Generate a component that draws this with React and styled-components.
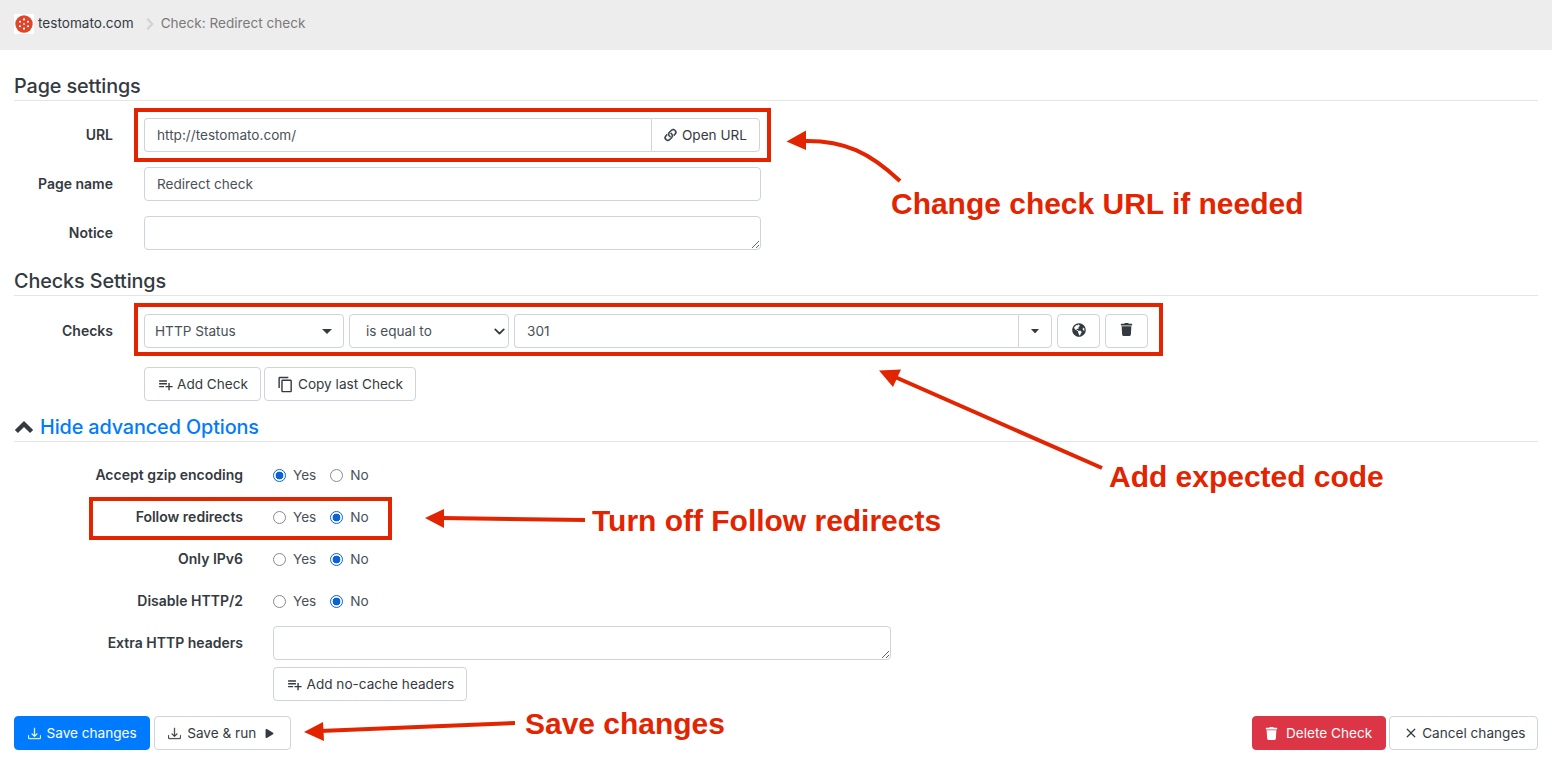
import React from "react";
import styled, { createGlobalStyle } from "styled-components";
import { BsLink45Deg, BsDownload, BsX } from "react-icons/bs";
import { MdPlaylistAdd, MdContentCopy } from "react-icons/md";
import { FaGlobeAmericas, FaTrash, FaPlay } from "react-icons/fa";
import { LuChevronDown } from "react-icons/lu";

const Global = createGlobalStyle`
  html, body { margin: 0; padding: 0; background: #fff; }
  body { font-family: Inter, "Noto Sans", sans-serif; font-size: 13.6px; color: #343a40; }
  * { box-sizing: border-box; }
`;

const Page = styled.div`
  position: relative;
  width: 1552px;
  height: 763px;
  overflow: hidden;
`;

const TopBar = styled.header`
  height: 50px;
  background: #ededed;
  display: flex;
  align-items: center;
  padding: 0 14px 4px;
  font-size: 13.6px;
`;

const LogoTile = styled.span`
  width: 20px;
  height: 20px;
  background: #fff;
  display: inline-flex;
  align-items: center;
  justify-content: center;
  margin: 2px 4px 0 0;
`;

const SiteName = styled.span`
  color: #343a40;
`;

const CrumbSep = styled.svg`
  margin: 2px 7px 0 12px;
`;

const Crumb = styled.span`
  color: #7a7a7a;
`;

const Main = styled.main`
  padding: 22px 14px 0;
`;

const Heading = styled.h2`
  margin: ${(p) => p.$top || 0}px 0 ${(p) => p.$bottom || 18}px;
  height: 29px;
  line-height: 28px;
  font-size: 19.8px;
  font-weight: 500;
  letter-spacing: -0.1px;
  color: #343a40;
  border-bottom: 1px solid #e3e5e7;
  display: flex;
  align-items: center;
`;

const ToggleLink = styled.a`
  color: #007bff;
  margin-left: 6px;
`;

const Row = styled.div`
  display: grid;
  grid-template-columns: ${(p) => p.$label || 99}px auto;
  column-gap: ${(p) => p.$gap || 31}px;
  align-items: center;
  justify-content: start;
  min-height: 34px;
  margin-bottom: ${(p) => p.$bottom ?? 15}px;
`;

const Label = styled.label`
  text-align: right;
  font-weight: 600;
  font-size: 14px;
  color: #343a40;
  padding-bottom: 1px;
`;

const Field = styled.input`
  width: ${(p) => p.$w || 617}px;
  height: 34px;
  padding: 0 12px;
  border: 1px solid #ced4da;
  border-radius: 4px;
  font: inherit;
  color: #495057;
  background: #fff;
  outline: none;
`;

const InputGroup = styled.div`
  display: flex;
  width: ${(p) => p.$w}px;
`;

const GroupField = styled(Field)`
  flex: 1;
  width: auto;
  min-width: 0;
  border-radius: 4px 0 0 4px;
  border-right: none;
`;

const Area = styled.textarea`
  display: block;
  width: ${(p) => p.$w || 617}px;
  height: 34px;
  padding: 6px 12px;
  border: 1px solid #ced4da;
  border-radius: 4px;
  font: inherit;
  outline: none;
`;

const Button = styled.button`
  display: inline-flex;
  align-items: center;
  justify-content: center;
  gap: ${(p) => p.$gap ?? 5}px;
  height: 34px;
  padding: 0 ${(p) => p.$pad ?? 12}px;
  font: inherit;
  border: 1px solid ${(p) => (p.$variant === "primary" ? "#007bff" : p.$variant === "danger" ? "#dc3545" : "#ced4da")};
  background: ${(p) => (p.$variant === "primary" ? "#007bff" : p.$variant === "danger" ? "#dc3545" : "#fff")};
  color: ${(p) => (p.$variant ? "#fff" : "#343a40")};
  border-radius: ${(p) => p.$radius || "4px"};
  white-space: nowrap;
`;

const CheckLine = styled.div`
  display: flex;
  align-items: center;
`;

const SelectWrap = styled.div`
  position: relative;
  width: ${(p) => p.$w}px;
  margin-right: 5px;
  height: 34px;
`;

const Select = styled.select`
  appearance: none;
  width: 100%;
  height: 34px;
  padding: 0 0 0 ${(p) => p.$pad}px;
  border: 1px solid #ced4da;
  border-radius: 4px;
  background: #fff;
  font: inherit;
  color: #495057;
  outline: none;
`;

const SelectIcon = styled.span`
  position: absolute;
  right: ${(p) => p.$right}px;
  top: 0;
  height: 34px;
  display: flex;
  align-items: center;
  pointer-events: none;
  color: #343a40;
`;

const IconBtn = styled(Button)`
  width: ${(p) => p.$w || 43}px;
  padding: 0 0 ${(p) => p.$lift ?? 3}px;
  margin-left: ${(p) => p.$ml ?? 5}px;
  color: #343a40;
`;

const Actions = styled.div`
  display: flex;
  gap: ${(p) => p.$gap ?? 3}px;
`;

const RadioRow = styled(Row)`
  margin-bottom: 8px;
`;

const RadioGroup = styled.div`
  display: flex;
  align-items: center;
  gap: 14px;
`;

const RadioLabel = styled.label`
  display: inline-flex;
  align-items: center;
  gap: 7px;
  color: #495057;
`;

const Radio = styled.input.attrs({ type: "radio" })`
  appearance: none;
  width: 13px;
  height: 13px;
  margin: 0;
  border-radius: 50%;
  border: 1px solid #8a8a8a;
  background: #fff;
  &:checked {
    border: 1px solid #0a63d8;
    background: radial-gradient(circle, #0a63d8 0 3.6px, #fff 4.2px);
  }
`;

const Footer = styled.div`
  display: flex;
  justify-content: space-between;
  margin-top: 15px;
`;

const BoldDownload = styled(BsDownload)`
  stroke: currentColor;
  stroke-width: 0.4;
`;

const BoldLink = styled(BsLink45Deg)`
  stroke: currentColor;
  stroke-width: 0.5;
  margin-left: -2px;
`;

const PlayIcon = styled(FaPlay)`
  margin: 0 3px;
`;

const Overlay = styled.svg`
  position: absolute;
  inset: 0;
  pointer-events: none;
`;

const Note = styled.div`
  position: absolute;
  left: ${(p) => p.$x}px;
  top: ${(p) => p.$y}px;
  font-family: "Liberation Sans", Arial, sans-serif;
  font-weight: 700;
  font-size: 29.98px;
  line-height: 34px;
  color: #e32400;
  white-space: nowrap;
`;

const Frame = styled.div`
  position: absolute;
  left: ${(p) => p.$x}px;
  top: ${(p) => p.$y}px;
  width: ${(p) => p.$w}px;
  height: ${(p) => p.$h}px;
  border: 4px solid #e32400;
  pointer-events: none;
`;

const Logo = () => (
  <svg width="18" height="18" viewBox="0 0 18 18">
    <circle cx="9" cy="9" r="8.7" fill="#e0452a" />
    {[0, 60, 120, 180, 240, 300].map((a) => (
      <circle
        key={a}
        cx={9 + 4.6 * Math.cos(((a + 30) * Math.PI) / 180)}
        cy={9 + 4.6 * Math.sin(((a + 30) * Math.PI) / 180)}
        r="1.05"
        fill="#fff"
      />
    ))}
    <circle cx="9" cy="9" r="0.9" fill="#fff" />
  </svg>
);

const Caret = ({ w = 10, h = 5 }) => (
  <svg width={w} height={h} viewBox="0 0 10 5" preserveAspectRatio="none">
    <path d="M0 0 H10 L5 5 Z" fill="currentColor" />
  </svg>
);

const ChevronUp = () => (
  <svg width="20" height="14" viewBox="0 0 20 14">
    <path d="M2.4 11.5 L10 4 L17.6 11.5" fill="none" stroke="currentColor" strokeWidth="4.4" />
  </svg>
);

const RadioPair = ({ name, yes }) => (
  <RadioGroup>
    <RadioLabel>
      <Radio name={name} defaultChecked={yes} />
      Yes
    </RadioLabel>
    <RadioLabel>
      <Radio name={name} defaultChecked={!yes} />
      No
    </RadioLabel>
  </RadioGroup>
);

export default function App() {
  return (
    <Page>
      <Global />
      <TopBar>
        <LogoTile>
          <Logo />
        </LogoTile>
        <SiteName>testomato.com</SiteName>
        <CrumbSep width="8" height="12" viewBox="0 0 8 12">
          <path d="M1.2 0.8 L6.2 6 L1.2 11.2" fill="none" stroke="#d2d2d2" strokeWidth="2.2" />
        </CrumbSep>
        <Crumb>Check: Redirect check</Crumb>
      </TopBar>
      <Main>
        <Heading $bottom={17}>Page settings</Heading>
        <Row>
          <Label>URL</Label>
          <InputGroup $w={616}>
            <GroupField defaultValue="http://testomato.com/" />
            <Button $radius="0 4px 4px 0" $gap={3} $pad={12}>
              <BoldLink size={17} />
              Open URL
            </Button>
          </InputGroup>
        </Row>
        <Row>
          <Label>Page name</Label>
          <Field defaultValue="Redirect check" />
        </Row>
        <Row $bottom={0}>
          <Label>Notice</Label>
          <Area />
        </Row>

        <Heading $top={17}>Checks Settings</Heading>
        <Row $bottom={19}>
          <Label>Checks</Label>
          <CheckLine>
            <SelectWrap $w={200}>
              <Select $pad={10} defaultValue="HTTP Status">
                <option>HTTP Status</option>
              </Select>
              <SelectIcon $right={12}>
                <Caret />
              </SelectIcon>
            </SelectWrap>
            <SelectWrap $w={160}>
              <Select $pad={16} defaultValue="is equal to">
                <option>is equal to</option>
              </Select>
              <SelectIcon $right={1}>
                <LuChevronDown size={17} strokeWidth={2.6} />
              </SelectIcon>
            </SelectWrap>
            <InputGroup $w={538}>
              <GroupField defaultValue="301" />
              <IconBtn $w={34} $ml={0} $lift={0} $radius="0 4px 4px 0">
                <Caret w={8} h={4.5} />
              </IconBtn>
            </InputGroup>
            <IconBtn>
              <FaGlobeAmericas size={14} />
            </IconBtn>
            <IconBtn>
              <FaTrash size={13} />
            </IconBtn>
          </CheckLine>
        </Row>
        <Row $bottom={0}>
          <span />
          <Actions>
            <Button $gap={3}>
              <MdPlaylistAdd size={17} />
              Add Check
            </Button>
            <Button $gap={4}>
              <MdContentCopy size={17} />
              Copy last Check
            </Button>
          </Actions>
        </Row>

        <Heading $top={12} $bottom={16}>
          <ChevronUp />
          <ToggleLink>Hide advanced Options</ToggleLink>
        </Heading>
        <RadioRow $label={229} $gap={30}>
          <Label>Accept gzip encoding</Label>
          <RadioPair name="gzip" yes />
        </RadioRow>
        <RadioRow $label={229} $gap={30}>
          <Label>Follow redirects</Label>
          <RadioPair name="follow" />
        </RadioRow>
        <RadioRow $label={229} $gap={30}>
          <Label>Only IPv6</Label>
          <RadioPair name="ipv6" />
        </RadioRow>
        <RadioRow $label={229} $gap={30}>
          <Label>Disable HTTP/2</Label>
          <RadioPair name="http2" />
        </RadioRow>
        <Row $label={229} $gap={30} $bottom={7}>
          <Label>Extra HTTP headers</Label>
          <Area $w={618} />
        </Row>
        <Row $label={229} $gap={30} $bottom={0}>
          <span />
          <Button $gap={4} $pad={11.5}>
            <MdPlaylistAdd size={17} />
            Add no-cache headers
          </Button>
        </Row>

        <Footer>
          <Actions $gap={4}>
            <Button $variant="primary" $gap={6} $pad={12.5}>
              <BoldDownload size={13} />
              Save changes
            </Button>
            <Button $gap={6} $pad={13}>
              <BoldDownload size={13} />
              Save &amp; run
              <PlayIcon size={9} />
            </Button>
          </Actions>
          <Actions>
            <Button $variant="danger" $gap={8} $pad={12.5}>
              <FaTrash size={13} />
              Delete Check
            </Button>
            <Button $gap={1} $pad={11.5}>
              <BsX size={20} />
              Cancel changes
            </Button>
          </Actions>
        </Footer>
      </Main>

      <Frame $x={134} $y={108} $w={637} $h={54} />
      <Frame $x={134} $y={303} $w={1029} $h={53} />
      <Frame $x={89} $y={497} $w={303} $h={43} />

      <Overlay width="1552" height="763" viewBox="0 0 1552 763">
        <g fill="none" stroke="#e32400" strokeWidth="4">
          <path d="M900 181 C 870 153, 845 140, 803 141" />
          <path d="M1102 468 L 895 377" />
          <path d="M585 520 L 442 518" />
          <path d="M515 723 L 320 731" />
        </g>
        <g fill="#e32400">
          <path d="M786.5 141.5 L806 130.5 L806 150 Z" />
          <path d="M879 370.5 L901 369.5 L893 387 Z" />
          <path d="M425 518 L444 509 L444 528 Z" />
          <path d="M304 732 L323 722 L324 741 Z" />
        </g>
      </Overlay>
      <Note $x={891} $y={187}>Change check URL if needed</Note>
      <Note $x={1109} $y={460}>Add expected code</Note>
      <Note $x={592} $y={504}>Turn off Follow redirects</Note>
      <Note $x={525} $y={707}>Save changes</Note>
    </Page>
  );
}
